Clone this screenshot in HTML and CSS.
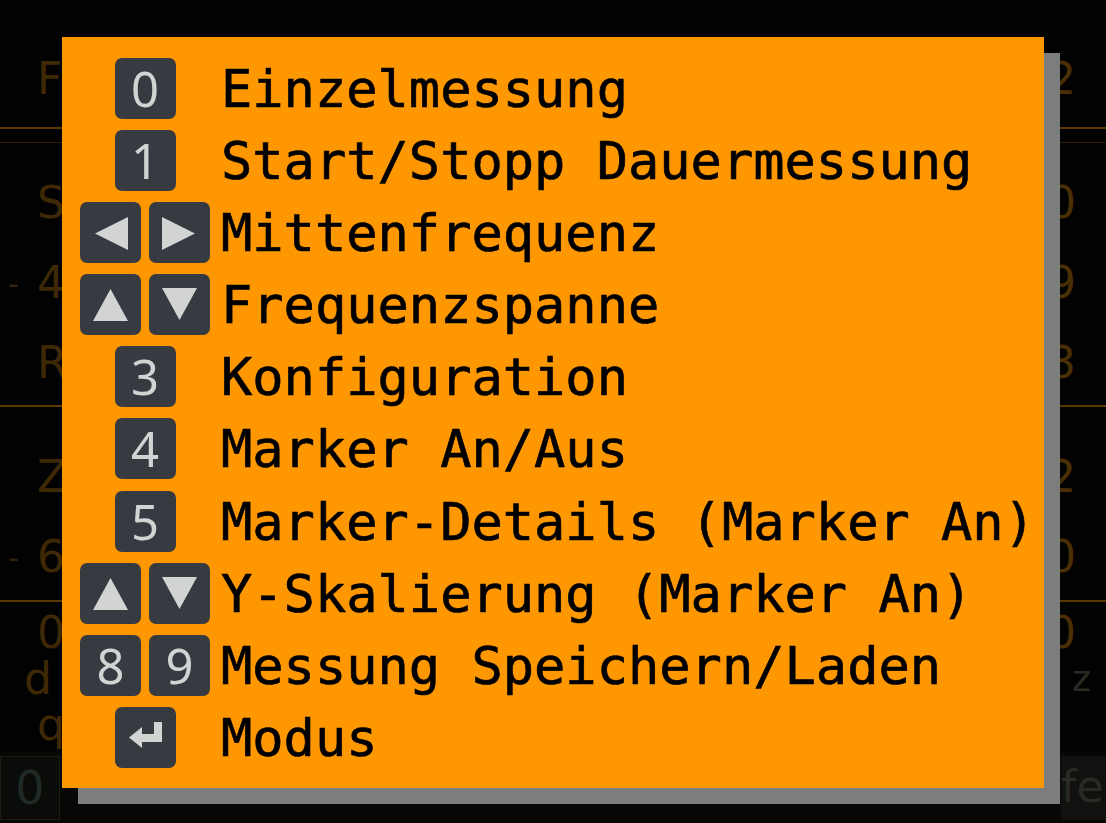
FILE: index.html
```html
<!DOCTYPE html>
<html lang="de">
<head>
<meta charset="utf-8">
<title>Tastenbelegung</title>
<link rel="stylesheet" href="styles.css">
</head>
<body>
<div class="screen">
  <div class="app">
    <div class="band band-top">
      <span class="lbl">F</span><span class="rlbl">2</span>
    </div>
    <div class="rule"></div>
    <div class="rule faint"></div>
    <div class="band band-mid">
      <div class="sub"><span class="lbl">S</span><span class="rlbl">0</span></div>
      <div class="sub"><span class="tick">-</span><span class="lbl">4</span><span class="rlbl">9</span></div>
      <div class="sub"><span class="lbl">R</span><span class="rlbl">3</span></div>
    </div>
    <div class="rule"></div>
    <div class="band band-low">
      <div class="sub"><span class="lbl">Z</span><span class="rlbl">2</span></div>
      <div class="sub"><span class="tick">-</span><span class="lbl">6</span><span class="rlbl">0</span></div>
    </div>
    <div class="rule"></div>
    <div class="band band-end">
      <div class="sub"><span class="lbl">0</span><span class="rlbl">0</span></div>
      <div class="sub"><span class="lbl lbl-d">d</span><span class="rlbl rz">z</span></div>
      <div class="sub"><span class="lbl">q</span><span class="rlbl"></span></div>
    </div>
    <div class="footer">
      <span class="fbox">0</span><span class="fright">fe</span>
    </div>
  </div>

  <div class="popup">
    <div class="row">
      <div class="keys"><span class="key">0</span></div>
      <span class="desc">Einzelmessung</span>
    </div>
    <div class="row">
      <div class="keys"><span class="key">1</span></div>
      <span class="desc">Start/Stopp Dauermessung</span>
    </div>
    <div class="row">
      <div class="keys">
        <span class="key"><svg viewBox="0 0 61 61"><polygon points="15,31.5 48,15 48,48"/></svg></span>
        <span class="key"><svg viewBox="0 0 61 61"><polygon points="13,15 46,31.5 13,48"/></svg></span>
      </div>
      <span class="desc">Mittenfrequenz</span>
    </div>
    <div class="row">
      <div class="keys">
        <span class="key"><svg viewBox="0 0 61 61"><polygon points="30.5,15 48,47 13,47"/></svg></span>
        <span class="key"><svg viewBox="0 0 61 61"><polygon points="13,14 48,14 30.5,46"/></svg></span>
      </div>
      <span class="desc">Frequenzspanne</span>
    </div>
    <div class="row">
      <div class="keys"><span class="key">3</span></div>
      <span class="desc">Konfiguration</span>
    </div>
    <div class="row">
      <div class="keys"><span class="key">4</span></div>
      <span class="desc">Marker An/Aus</span>
    </div>
    <div class="row">
      <div class="keys"><span class="key">5</span></div>
      <span class="desc">Marker-Details (Marker An)</span>
    </div>
    <div class="row">
      <div class="keys">
        <span class="key"><svg viewBox="0 0 61 61"><polygon points="30.5,15 48,47 13,47"/></svg></span>
        <span class="key"><svg viewBox="0 0 61 61"><polygon points="13,14 48,14 30.5,46"/></svg></span>
      </div>
      <span class="desc">Y-Skalierung (Marker An)</span>
    </div>
    <div class="row">
      <div class="keys"><span class="key">8</span><span class="key">9</span></div>
      <span class="desc">Messung Speichern/Laden</span>
    </div>
    <div class="row">
      <div class="keys">
        <span class="key"><svg viewBox="0 0 61 61"><path d="M39 15 H47 V35 H27 V41 L14 30.5 L27 20 V27 H39 Z"/></svg></span>
      </div>
      <span class="desc">Modus</span>
    </div>
  </div>
</div>
</body>
</html>
```

FILE: styles.css
```css
* { box-sizing: border-box; }

html, body {
  margin: 0;
  padding: 0;
  background: #020202;
}

.screen {
  position: relative;
  width: 1106px;
  height: 823px;
  overflow: hidden;
  background: #020202;
}

/* ---------- dim application underneath ---------- */
.app {
  display: flex;
  flex-direction: column;
  height: 100%;
  font-family: "DejaVu Sans", sans-serif;
  color: #3f2904;
}

.band {
  display: flex;
  flex-direction: column;
}

.band-top {
  height: 127px;
  flex-direction: row;
  align-items: flex-end;
  justify-content: space-between;
  padding-bottom: 26px;
}

.band-mid { height: 262px; padding-top: 20px; }
.band-low { height: 193px; padding-top: 30px; }
.band-end { height: 150px; padding-top: 8px; }

.sub {
  position: relative;
  height: 80px;
  display: flex;
  align-items: center;
  justify-content: space-between;
}

.band-end .sub { height: 46px; }

.lbl {
  display: inline-block;
  padding-left: 37px;
  font-size: 44px;
  line-height: 1;
}

.lbl-d { padding-left: 24px; }

.tick {
  position: absolute;
  left: 8px;
  font-size: 30px;
  color: #35220a;
}

.rlbl {
  display: inline-block;
  width: 58px;
  font-size: 44px;
  line-height: 1;
  text-align: left;
  color: #4a2f04;
}

.rz { padding-left: 24px; color: #2a2a22; font-size: 36px; }

.rule {
  height: 2px;
  background: #5a3800;
  flex: none;
}

.rule.faint {
  height: 1px;
  margin-top: 13px;
  background: #2e1e02;
}

.footer {
  flex: 1;
  display: flex;
  justify-content: space-between;
  align-items: center;
  background: #070806;
}

.fbox {
  width: 60px;
  height: 64px;
  border: 1px solid #1a1c18;
  background: #0a0c0a;
  color: #1f2a25;
  font-size: 46px;
  text-align: center;
  line-height: 62px;
}

.fright {
  width: 45px;
  color: #2a2a24;
  font-size: 44px;
  background: #111110;
  height: 64px;
  line-height: 62px;
}

/* ---------- popup ---------- */
.popup {
  position: absolute;
  left: 62px;
  top: 37px;
  width: 982px;
  height: 751px;
  background: #ff9800;
  box-shadow: 16px 16px 0 #7b7e7c;
  padding: 21px 0 0 18px;
  display: flex;
  flex-direction: column;
  gap: 11.1px;
}

.row {
  display: flex;
  align-items: center;
  height: 61px;
}

.keys {
  width: 130px;
  display: flex;
  justify-content: center;
  gap: 8px;
  flex: none;
}

.key {
  width: 61px;
  height: 61px;
  border-radius: 7px;
  background: #373a40;
  color: #d2d3d3;
  font-family: "Noto Sans", "DejaVu Sans", sans-serif;
  font-size: 49px;
  line-height: 61px;
  text-align: center;
  display: flex;
  align-items: center;
  justify-content: center;
}

.key svg {
  width: 61px;
  height: 61px;
  display: block;
  fill: #d2d3d3;
}

.desc {
  margin-left: 11px;
  padding-top: 2px;
  font-family: "DejaVu Sans Mono", monospace;
  font-size: 52px;
  line-height: 61px;
  color: #000;
  -webkit-text-stroke: 0.7px #000;
  white-space: pre;
}
```
